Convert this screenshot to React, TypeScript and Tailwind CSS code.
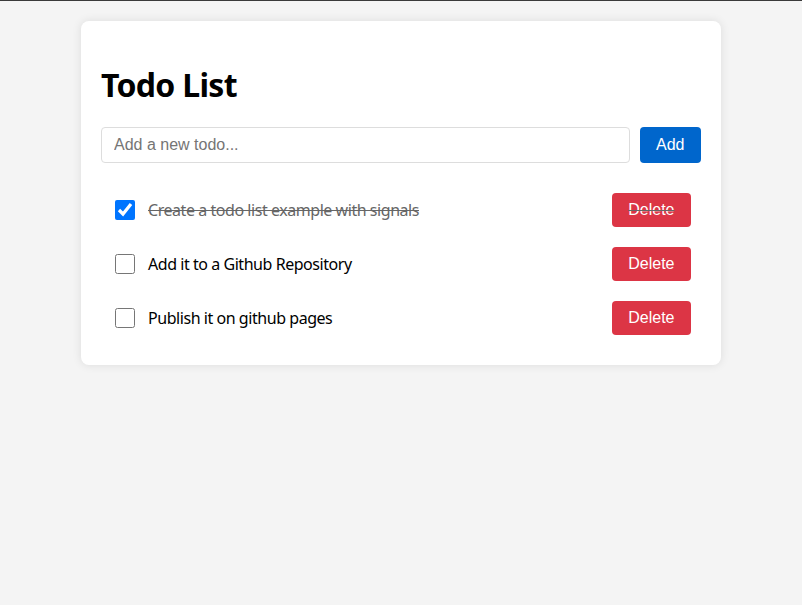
import { useState } from "react";

type Todo = { id: number; text: string; done: boolean };

const INITIAL: Todo[] = [
  { id: 1, text: "Create a todo list example with signals", done: true },
  { id: 2, text: "Add it to a Github Repository", done: false },
  { id: 3, text: "Publish it on github pages", done: false },
];

export default function App() {
  const [todos, setTodos] = useState<Todo[]>(INITIAL);
  const [draft, setDraft] = useState("");

  const addTodo = () => {
    if (!draft.trim()) return;
    setTodos((prev) => [...prev, { id: Date.now(), text: draft.trim(), done: false }]);
    setDraft("");
  };

  return (
    <div className="min-h-[605px] bg-[#f4f4f4] border-t border-[#3a3a3a] font-['Noto_Sans',sans-serif] text-black">
      <div className="mx-auto mt-5 w-[640px] rounded-lg bg-white p-5 shadow-[0_0_10px_rgba(0,0,0,0.1)]">
        <h1 className="mt-[22px] mb-[20px] text-[32px] font-bold leading-[44px] tracking-[-0.7px]">Todo List</h1>

        <div className="flex gap-[10px]">
          <input
            value={draft}
            onChange={(e) => setDraft(e.target.value)}
            placeholder="Add a new todo..."
            className="h-9 flex-1 rounded border border-[#dddddd] px-3 font-['Liberation_Sans',Arial,sans-serif] text-base placeholder:text-[#757575] outline-none"
          />
          <button
            onClick={addTodo}
            className="h-9 rounded bg-[#0066cc] px-[16.5px] font-['Liberation_Sans',Arial,sans-serif] text-base text-white"
          >
            Add
          </button>
        </div>

        <ul className="mt-5">
          {todos.map((todo) => (
            <li
              key={todo.id}
              className={`flex h-[54px] items-center px-[10px] ${todo.done ? "text-[#666666] line-through" : ""}`}
            >
              <input
                type="checkbox"
                checked={todo.done}
                onChange={() =>
                  setTodos((prev) => prev.map((t) => (t.id === todo.id ? { ...t, done: !t.done } : t)))
                }
                className="ml-1 mr-[13px] h-5 w-5 accent-[#0075ff]"
              />
              <span className="flex-1 text-base tracking-[-0.45px]">{todo.text}</span>
              <button
                onClick={() => setTodos((prev) => prev.filter((t) => t.id !== todo.id))}
                className="h-[34px] rounded bg-[#dc3545] px-[16.5px] font-['Liberation_Sans',Arial,sans-serif] text-base text-white"
              >
                Delete
              </button>
            </li>
          ))}
        </ul>
      </div>
    </div>
  );
}
